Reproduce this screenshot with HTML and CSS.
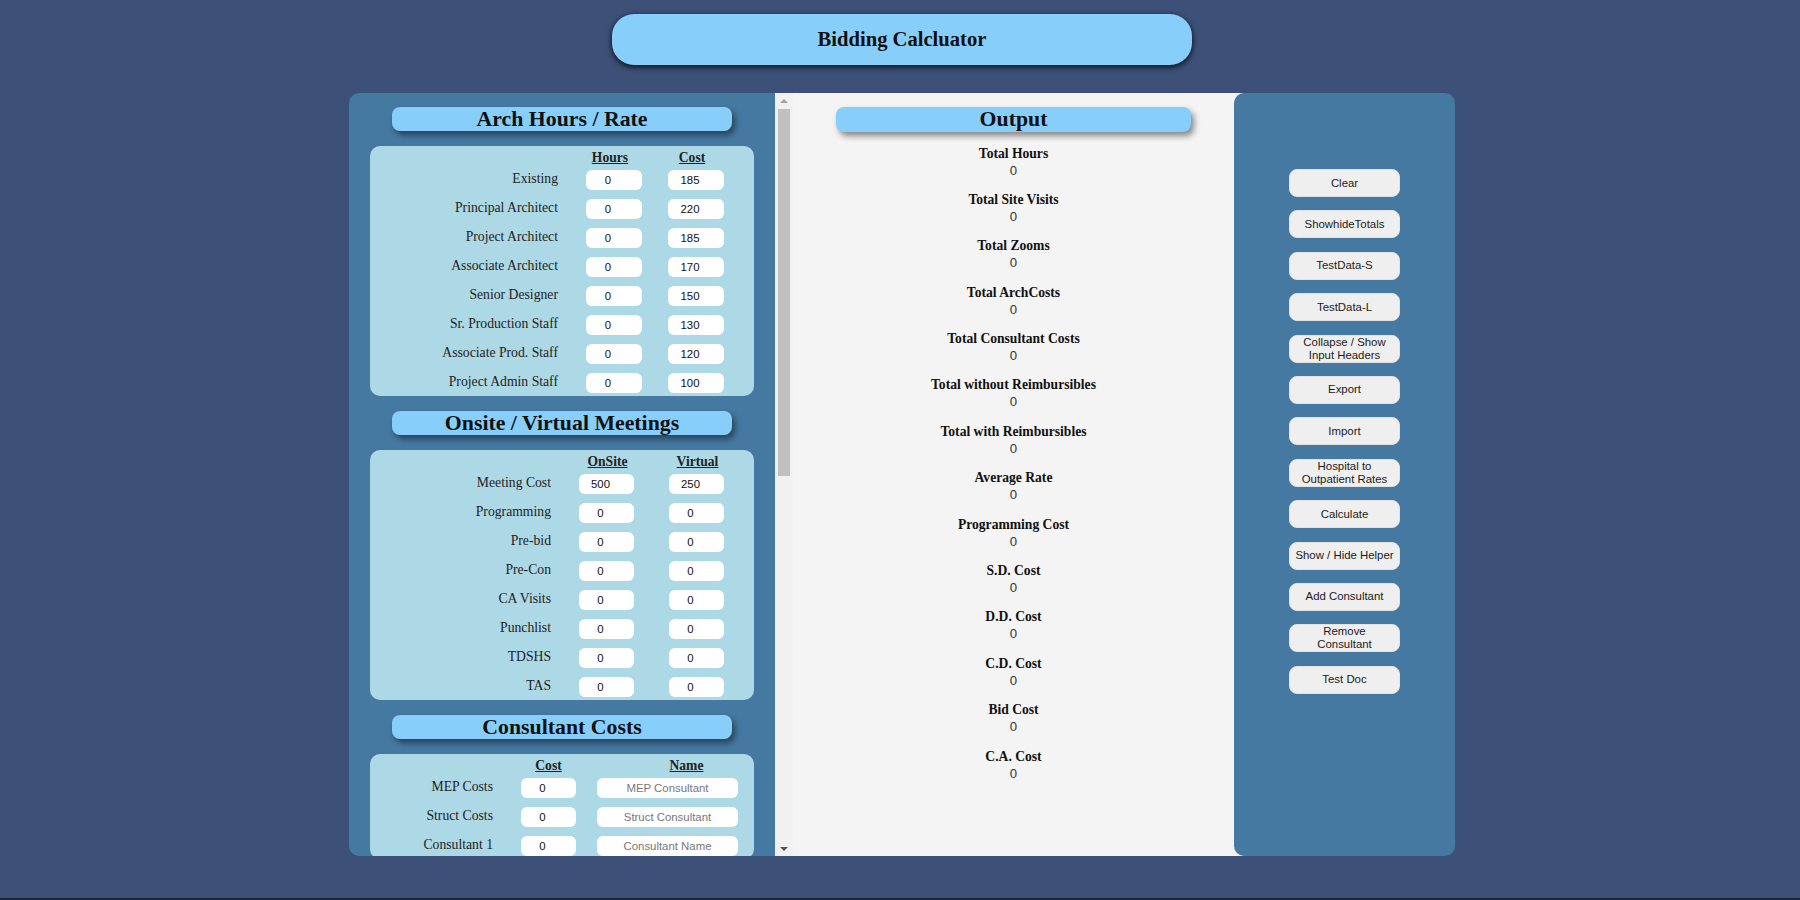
FILE: index.html
```html
<!DOCTYPE html>
<html lang="en">
<head>
<meta charset="utf-8">
<title>Bidding Calcluator</title>
<link rel="stylesheet" href="styles.css">
</head>
<body>
<header class="title">Bidding Calcluator</header>
<main class="main">
  <section class="inputs">
    <h2 class="bar">Arch Hours / Rate</h2>
    <div class="box grid arch">
      <span></span><span class="colhead">Hours</span><span class="colhead">Cost</span>
      <label>Existing</label><input class="num" value="0"><input class="num" value="185">
      <label>Principal Architect</label><input class="num" value="0"><input class="num" value="220">
      <label>Project Architect</label><input class="num" value="0"><input class="num" value="185">
      <label>Associate Architect</label><input class="num" value="0"><input class="num" value="170">
      <label>Senior Designer</label><input class="num" value="0"><input class="num" value="150">
      <label>Sr. Production Staff</label><input class="num" value="0"><input class="num" value="130">
      <label>Associate Prod. Staff</label><input class="num" value="0"><input class="num" value="120">
      <label>Project Admin Staff</label><input class="num" value="0"><input class="num" value="100">
    </div>

    <h2 class="bar">Onsite / Virtual Meetings</h2>
    <div class="box grid meet">
      <span></span><span class="colhead">OnSite</span><span class="colhead">Virtual</span>
      <label>Meeting Cost</label><input class="num" value="500"><input class="num" value="250">
      <label>Programming</label><input class="num" value="0"><input class="num" value="0">
      <label>Pre-bid</label><input class="num" value="0"><input class="num" value="0">
      <label>Pre-Con</label><input class="num" value="0"><input class="num" value="0">
      <label>CA Visits</label><input class="num" value="0"><input class="num" value="0">
      <label>Punchlist</label><input class="num" value="0"><input class="num" value="0">
      <label>TDSHS</label><input class="num" value="0"><input class="num" value="0">
      <label>TAS</label><input class="num" value="0"><input class="num" value="0">
    </div>

    <h2 class="bar">Consultant Costs</h2>
    <div class="box grid cons">
      <span></span><span class="colhead">Cost</span><span class="colhead namehead">Name</span>
      <label>MEP Costs</label><input class="num" value="0"><input class="name" placeholder="MEP Consultant">
      <label>Struct Costs</label><input class="num" value="0"><input class="name" placeholder="Struct Consultant">
      <label>Consultant 1</label><input class="num" value="0"><input class="name" placeholder="Consultant Name">
    </div>
  </section>

  <section class="output">
    <div class="scrollbar">
      <span class="arrow up"></span>
      <span class="thumb"></span>
      <span class="spacer"></span>
      <span class="arrow down"></span>
    </div>
    <div class="out-content">
      <h2 class="bar out-bar">Output</h2>
      <div class="items">
        <div class="item"><div class="k">Total Hours</div><div class="v">0</div></div>
        <div class="item"><div class="k">Total Site Visits</div><div class="v">0</div></div>
        <div class="item"><div class="k">Total Zooms</div><div class="v">0</div></div>
        <div class="item"><div class="k">Total ArchCosts</div><div class="v">0</div></div>
        <div class="item"><div class="k">Total Consultant Costs</div><div class="v">0</div></div>
        <div class="item"><div class="k">Total without Reimbursibles</div><div class="v">0</div></div>
        <div class="item"><div class="k">Total with Reimbursibles</div><div class="v">0</div></div>
        <div class="item"><div class="k">Average Rate</div><div class="v">0</div></div>
        <div class="item"><div class="k">Programming Cost</div><div class="v">0</div></div>
        <div class="item"><div class="k">S.D. Cost</div><div class="v">0</div></div>
        <div class="item"><div class="k">D.D. Cost</div><div class="v">0</div></div>
        <div class="item"><div class="k">C.D. Cost</div><div class="v">0</div></div>
        <div class="item"><div class="k">Bid Cost</div><div class="v">0</div></div>
        <div class="item"><div class="k">C.A. Cost</div><div class="v">0</div></div>
      </div>
    </div>
  </section>

  <aside class="actions">
    <button class="btn">Clear</button>
    <button class="btn">ShowhideTotals</button>
    <button class="btn">TestData-S</button>
    <button class="btn">TestData-L</button>
    <button class="btn">Collapse / Show<br>Input Headers</button>
    <button class="btn">Export</button>
    <button class="btn">Import</button>
    <button class="btn">Hospital to<br>Outpatient Rates</button>
    <button class="btn">Calculate</button>
    <button class="btn">Show / Hide Helper</button>
    <button class="btn">Add Consultant</button>
    <button class="btn">Remove<br>Consultant</button>
    <button class="btn">Test Doc</button>
  </aside>
</main>
<div class="edge"></div>
</body>
</html>
```

FILE: styles.css
```css
* { box-sizing: border-box; }

html, body { margin: 0; }

body {
  background: #3d5078;
  padding: 14px 0 0 4px;
  height: 900px;
  overflow: hidden;
  font-family: "Liberation Serif", "Times New Roman", serif;
  color: #111;
}

.title {
  width: 580px;
  height: 51px;
  margin: 0 auto;
  background: #87cefa;
  border-radius: 22px;
  box-shadow: 0 2px 5px 1px rgba(0, 0, 0, 0.65);
  font-weight: bold;
  font-size: 20.6px;
  line-height: 51px;
  text-align: center;
  color: #111;
}

.main {
  width: 1106px;
  height: 763px;
  margin: 28px auto 0;
  display: flex;
}

/* ---------- left inputs panel ---------- */
.inputs {
  width: 426px;
  flex: none;
  background: #4679a2;
  border-radius: 10px 0 0 10px;
  padding-top: 14px;
  overflow: hidden;
}

.bar {
  margin: 0 auto;
  width: 340px;
  height: 24px;
  background: #87cefa;
  border-radius: 8px;
  box-shadow: 3px 4px 6px rgba(0, 0, 0, 0.45);
  font-size: 21.8px;
  font-weight: bold;
  line-height: 24px;
  text-align: center;
  color: #111;
}

.box {
  margin: 15px 21px 15px;
  background: #add8e6;
  border-radius: 10px;
  padding: 2.5px 0 3px;
}

.grid {
  display: grid;
  grid-template-rows: 12.5px;
  grid-auto-rows: 20px;
  row-gap: 9px;
  align-items: start;
}

.arch { grid-template-columns: 216px 82px 56px; }
.meet { grid-template-columns: 209px 90px 55px; }
.cons { grid-template-columns: 151px 76px 141px; }

.grid label {
  font-size: 13.7px;
  line-height: 17px;
  text-align: right;
  padding-right: 28px;
  color: #222;
  white-space: nowrap;
}

.colhead {
  font-size: 13.6px;
  line-height: 17px;
  font-weight: bold;
  text-decoration: underline;
  text-align: center;
  color: #222;
}

.arch .colhead { width: 56px; margin-left: -4px; }
.meet .colhead { width: 55px; margin-left: 1px; }
.cons .colhead { width: 55px; }
.cons .colhead.namehead { width: 103px; margin-left: 38px; }

.grid input {
  height: 20px;
  border: none;
  border-radius: 6px;
  background: #fff;
  font-family: "Liberation Sans", Arial, sans-serif;
  font-size: 11.4px;
  color: #111;
  outline: none;
}

.arch input.num { width: 56px; }
.meet input.num, .cons input.num { width: 55px; }

input.num {
  text-align: center;
  padding: 0 12px 0 0;
}

input.name {
  width: 141px;
  text-align: center;
  padding: 0;
}

input.name::placeholder { color: #777; }

/* ---------- output panel ---------- */
.output {
  width: 459px;
  flex: none;
  display: flex;
  background: #f4f4f4;
  box-shadow: 12px 0 0 #f4f4f4;
}

.scrollbar {
  width: 18px;
  flex: none;
  background: #f1f1f1;
  display: flex;
  flex-direction: column;
  align-items: center;
  padding: 6px 0 5px;
}

.arrow {
  width: 0;
  height: 0;
  border-left: 4px solid transparent;
  border-right: 4px solid transparent;
}

.arrow.up { border-bottom: 4px solid #a3a3a3; }
.arrow.down { border-top: 4px solid #505050; }

.thumb {
  margin-top: 6px;
  width: 12px;
  height: 367px;
  background: #c1c1c1;
}

.spacer { flex: 1; }

.out-content {
  flex: 1;
  padding-top: 14px;
}

.out-bar {
  width: 355px;
  height: 25px;
  line-height: 25px;
}

.items {
  margin-top: 12.5px;
  text-align: center;
}

.item { margin-bottom: 12.4px; }

.k {
  font-size: 13.6px;
  font-weight: bold;
  line-height: 17px;
  color: #111;
}

.v {
  font-family: "Liberation Sans", Arial, sans-serif;
  font-size: 13.2px;
  line-height: 17px;
  color: #333;
}

/* ---------- right actions panel ---------- */
.actions {
  width: 221px;
  flex: none;
  position: relative;
  background: #4679a2;
  border-radius: 10px;
  padding-top: 76px;
  display: flex;
  flex-direction: column;
  align-items: center;
  gap: 13.4px;
}

.btn {
  width: 111px;
  height: 28px;
  padding: 0 2px;
  border: 1px solid #e2e2e2;
  border-radius: 8px;
  background: #efefef;
  font-family: "Liberation Sans", Arial, sans-serif;
  font-size: 11.4px;
  line-height: 13px;
  color: #1a1a1a;
  cursor: pointer;
}

.edge {
  margin-top: 42px;
  height: 3px;
  margin-left: -4px;
  background: #1e2436;
}
```
